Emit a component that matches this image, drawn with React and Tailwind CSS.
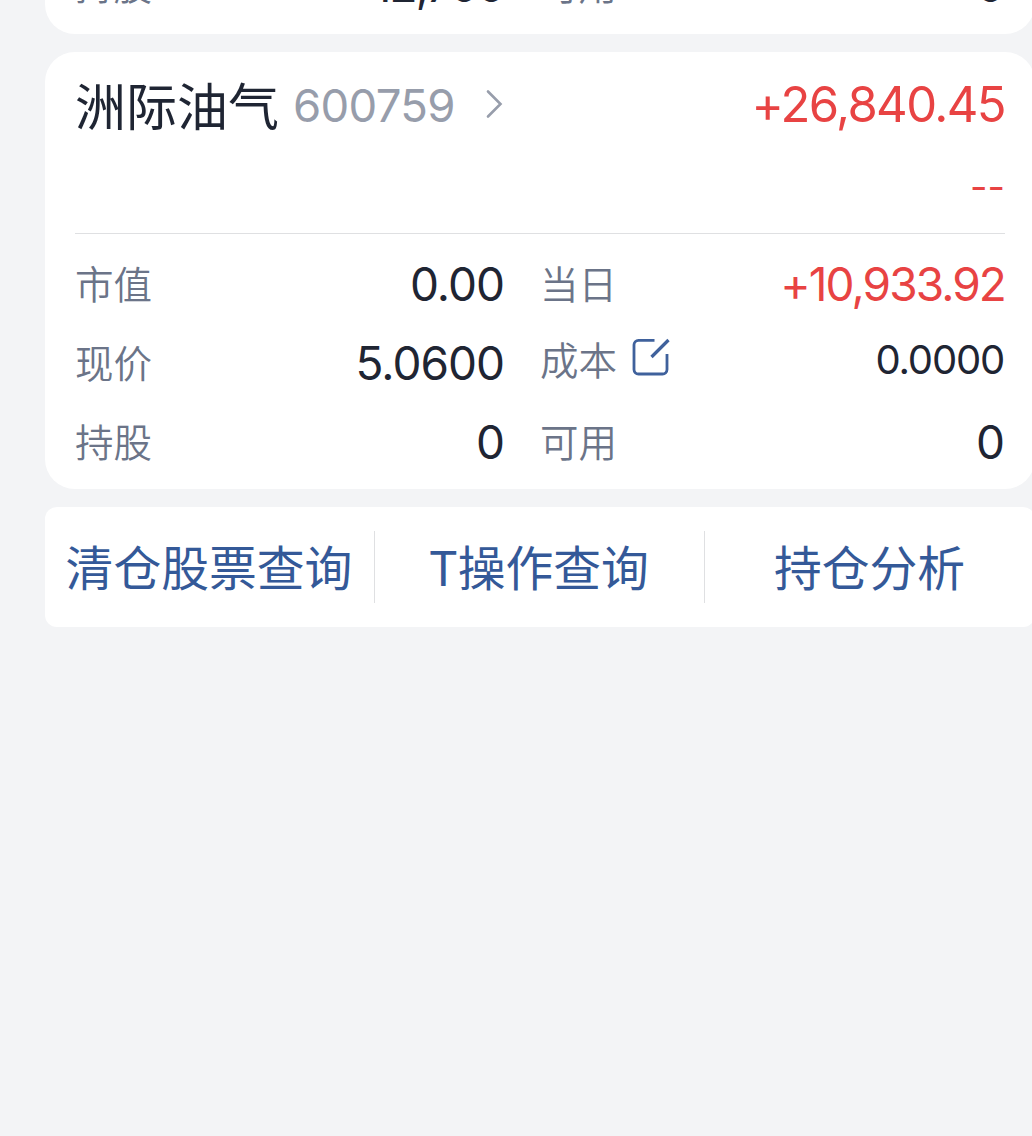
const NUM = "font-['Inter','Liberation_Sans',sans-serif] font-normal";

const Field = ({ label, value, icon, className = "", valueClass = "mr-px text-[46px] tracking-[-1px] text-[#1f2533]" }) => (
  <div className={`flex h-[79px] items-center justify-between ${className}`}>
    <div className="flex items-center">
      <span className="pb-[4px] text-[38.5px] font-[350] leading-none text-[#6b7488]">{label}</span>
      {icon}
    </div>
    <span className={`${NUM} pb-px leading-none ${valueClass}`}>{value}</span>
  </div>
);

const EditIcon = () => (
  <svg className="ml-[15px] -mt-2 h-[38px] w-[38px]" viewBox="0 0 38 38" fill="none" stroke="#3f619c" strokeWidth="2.8">
    <path d="M22.5 2.3H6.5A4.5 4.5 0 0 0 2 6.8V31.5A4.5 4.5 0 0 0 6.5 36H30.5A4.5 4.5 0 0 0 35 31.5V16" />
    <path d="M19.5 19L36.5 2" strokeWidth="3.2" />
  </svg>
);

const Chevron = () => (
  <svg className="ml-[30px] h-[30px] w-[18px]" viewBox="0 0 18 30" fill="none" stroke="#979dab" strokeWidth="2.6" strokeLinecap="round">
    <path d="M3 2.5L15.5 15L3 27.5" />
  </svg>
);

const actions = ["清仓股票查询", "T操作查询", "持仓分析"];

export default function App() {
  return (
    <div className="h-[1136px] w-[1032px] overflow-hidden bg-[#f3f4f6] pl-[45px] font-['Noto_Sans_CJK_SC',sans-serif]">
      <div className="flex w-[990px] flex-col gap-[18px]">
        {/* Previous holding, scrolled off the top */}
        <div className="flex h-[34px] flex-col justify-end overflow-hidden rounded-b-[30px] bg-white px-[30px]">
          <div className="flex gap-[35px] pb-[9px]">
            <Field className="w-[430px] shrink-0" label="持股" value="12,700" valueClass="mr-px text-[46px] tracking-[-1.9px] text-[#1f2533]" />
            <Field className="w-[465px] shrink-0" label="可用" value="0" />
          </div>
        </div>

        {/* Current holding */}
        <div className="h-[437px] rounded-[30px] bg-white px-[30px]">
          <div className="flex h-[182px] flex-col border-b border-[#dfe0e2]">
            <div className="flex h-[104px] items-center justify-between">
              <div className="flex items-center">
                <span className="text-[51px] leading-none text-[#1f2533]">洲际油气</span>
                <span className={`${NUM} ml-[14px] pt-[3px] text-[45.5px] leading-none tracking-[-0.7px] text-[#979dab]`}>600759</span>
                <Chevron />
              </div>
              <span className={`${NUM} pt-px text-[49px] leading-none tracking-[-1.6px] text-[#e84343]`}>+26,840.45</span>
            </div>
            <div className={`${NUM} text-right text-[38px] leading-[60px] text-[#e84343]`}>--</div>
          </div>
          <div className="grid grid-cols-[430px_465px] gap-x-[35px] pt-[11px]">
            <Field label="市值" value="0.00" />
            <Field label="当日" value="+10,933.92" valueClass="text-[46px] tracking-[-1.9px] text-[#e84343]" />
            <Field label="现价" value="5.0600" />
            <Field
              label="成本"
              value="0.0000"
              icon={<EditIcon />}
              className="pb-[6px]"
              valueClass="mr-px text-[40px] tracking-[-1.2px] text-[#1f2533]"
            />
            <Field label="持股" value="0" />
            <Field label="可用" value="0" />
          </div>
        </div>

        {/* Shortcuts */}
        <div className="grid h-[120px] grid-cols-3 items-center divide-x divide-[#dfe0e2] rounded-xl bg-white">
          {actions.map((name) => (
            <button key={name} className="h-[72px] whitespace-nowrap pb-[2px] pr-px text-[47.8px] leading-none text-[#345998]">
              {name}
            </button>
          ))}
        </div>
      </div>
    </div>
  );
}
